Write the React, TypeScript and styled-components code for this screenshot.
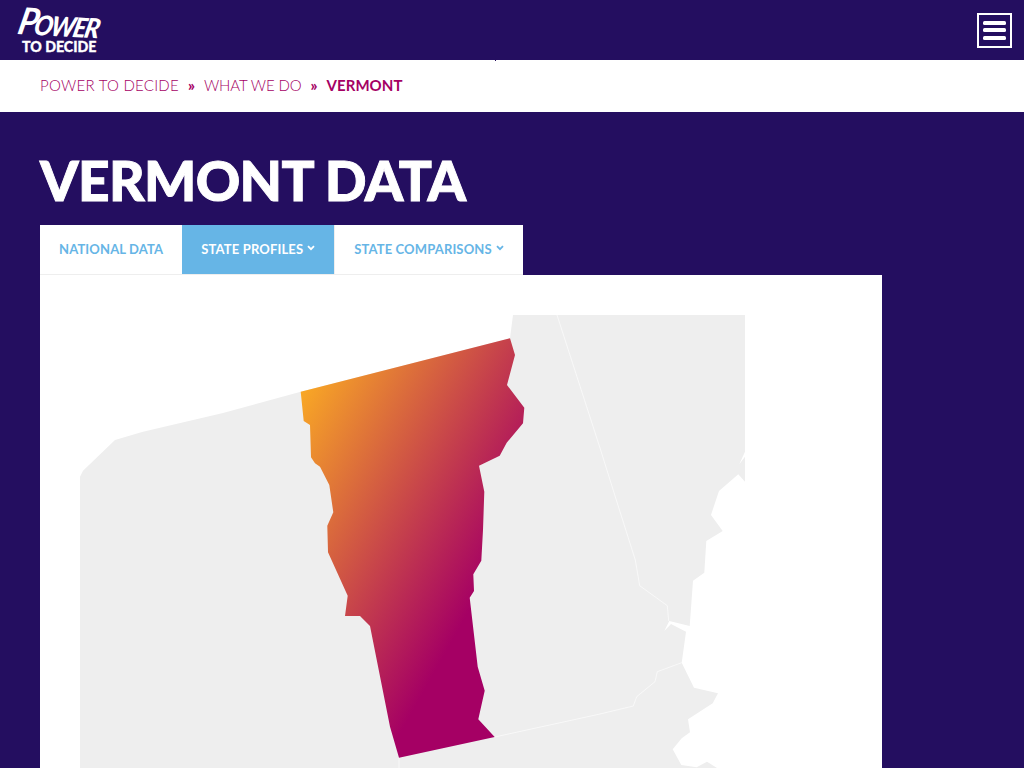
import React from "react";
import styled, { createGlobalStyle } from "styled-components";

const Global = createGlobalStyle`
  html, body { margin: 0; padding: 0; background: #240e60; }
  body { font-family: Lato, "Liberation Sans", sans-serif; }
`;
const Page = styled.div`
  height: 768px; overflow: hidden; display: flex; flex-direction: column; background: #240e60;
`;
const TopBar = styled.header`
  height: 60px; flex: none; display: flex; justify-content: space-between; align-items: center;
  padding: 0 12px 0 18px; position: relative;
`;
const Logo = styled.a`
  display: flex; flex-direction: column; align-items: flex-start; color: #fff; width: 84px;
`;
const LogoScript = styled.span`
  display: flex; align-items: baseline; white-space: nowrap; margin: -6px 0 0 -3px;
  font: italic 900 27px/30px Lato, sans-serif; letter-spacing: -1.8px;
  transform: skewX(-10deg) rotate(3deg) scaleX(0.92); transform-origin: left bottom;
`;
const LogoInitial = styled.span`
  font-size: 37px; line-height: 38px; font-weight: 700; letter-spacing: -1px; margin-right: -2.5px;
`;
const LogoSub = styled.span`
  font: 900 14.2px/13px Lato, sans-serif; -webkit-text-stroke: 0.3px #fff; white-space: nowrap;
  margin: 1px 0 0 4px;
`;
const Burger = styled.button`
  width: 35px; height: 35px; box-sizing: border-box; border: 2px solid #fff; background: none; padding: 0 4px;
  display: flex; flex-direction: column; justify-content: center; gap: 3.5px;
`;
const BurgerBar = styled.span`
  display: block; height: 4px; background: #fff; border-radius: 1.5px;
`;
const Tick = styled.i`
  position: absolute; left: 495px; top: 59px; width: 1px; height: 2px; background: #240e60;
`;
const Crumbs = styled.nav`
  height: 52px; box-sizing: border-box; flex: none; background: #fff; display: flex; align-items: center;
  padding: 0 40px 2px; gap: 9px; font-size: 15px; color: #a50064; font-weight: 300;
`;
const Crumb = styled.span<{ $spacing: string }>`letter-spacing: ${p => p.$spacing};`;
const CrumbSep = styled.span`font-weight: 900;`;
const CrumbNow = styled.span`font-weight: 700; letter-spacing: 0.05px;`;
const Main = styled.main`
  flex: 1; min-height: 0; padding: 0 40px; display: flex; flex-direction: column; align-items: flex-start;
`;
const Title = styled.h1`
  margin: 31px 0 7px; font: 900 55px/75px Lato, sans-serif; color: #fff; letter-spacing: -0.65px;
  -webkit-text-stroke: 0.9px #fff; white-space: nowrap;
`;
const Tabs = styled.div`
  display: flex; height: 50px; background: #fff; box-sizing: border-box; border-bottom: 1px solid #eee; flex: none;
`;
const Tab = styled.a<{ $active?: boolean }>`
  display: flex; align-items: center; gap: 4px; padding: 0 19px 2px; font-size: 13px; font-weight: 700;
  letter-spacing: 0.14px;
  color: ${p => (p.$active ? "#fff" : "#66b5e6")}; background: ${p => (p.$active ? "#66b5e6" : "#fff")};
  border-right: ${p => (p.$active ? "1px solid #eee" : "0")}; white-space: nowrap;
`;
const Chevron = styled.svg`width: 8px; height: 6px; margin-top: -2px;`;
const Card = styled.section`
  width: 842px; flex: 1; min-height: 0; background: #fff; overflow: hidden;
`;
const MapSvg = styled.svg`display: block; width: 842px; height: 493px;`;

const vermont =
  "300.7,391.7 510,338.3 515,355 507,385 524.3,407.7 523,423.3 506.7,442.7 499.7,455.7 479,465.7 484.3,491.7 483,530 481.3,560.7 473.3,574.3 474,591 469.7,597.7 477.7,666.7 484.7,690.7 478.3,719.3 494.7,737 399,757.7 390,726.7 370,626 360,616 345,616 347.7,595.7 328,552.3 327.3,525.7 333.3,512.3 329.3,485 320,466.7 315,463.3 311,457.3 310,425 303.7,421";
const region =
  "80,768 80,476.7 83,470.7 115,440 143,431.7 223,413 300.7,391.7 510,338.3 513,315 745,315 745,451.7 739.3,464.3 745,456.7 745,481.7 738.3,474.3 719,491 711,515 722.7,531 706.3,541 704.3,572.7 693,580.7 689.7,626 669.3,621 664.3,631 671,624 686,631.7 681.7,662.7 694,687.7 718,693.3 712.7,703.3 688,719.3 690,732.3 681.7,738.3 672.7,749.3 681.3,765 696.7,767.3 707,761.7 717,768";
const borders = [
  "557,315 600,448 620,511.7 635.3,560 639.7,585.7 667.3,605.7 668.7,621",
  "681.7,662.7 657.3,671.7 655,681.7 636.7,696.7 633.3,706 600,714 494.7,737",
  "399,757.7 399,768",
];

export default function App() {
  return (
    <Page>
      <Global />
      <TopBar>
        <Logo aria-label="Power to Decide">
          <LogoScript><LogoInitial>P</LogoInitial>OWER</LogoScript>
          <LogoSub>TO DECIDE</LogoSub>
        </Logo>
        <Burger aria-label="Menu">
          <BurgerBar />
          <BurgerBar />
          <BurgerBar />
        </Burger>
        <Tick />
      </TopBar>
      <Crumbs>
        <Crumb $spacing="0.25px">POWER TO DECIDE</Crumb>
        <CrumbSep>»</CrumbSep>
        <Crumb $spacing="-0.1px">WHAT WE DO</Crumb>
        <CrumbSep>»</CrumbSep>
        <CrumbNow>VERMONT</CrumbNow>
      </Crumbs>
      <Main>
        <Title>VERMONT DATA</Title>
        <Tabs>
          <Tab>NATIONAL DATA</Tab>
          <Tab $active>
            STATE PROFILES
            <Chevron viewBox="0 0 8 6"><path d="M1 1.2 L4 4.2 L7 1.2" fill="none" stroke="currentColor" strokeWidth="1.8" /></Chevron>
          </Tab>
          <Tab>
            STATE COMPARISONS
            <Chevron viewBox="0 0 8 6"><path d="M1 1.2 L4 4.2 L7 1.2" fill="none" stroke="currentColor" strokeWidth="1.8" /></Chevron>
          </Tab>
        </Tabs>
        <Card>
          <MapSvg viewBox="40 275 842 493">
            <defs>
              <linearGradient id="vt" gradientUnits="userSpaceOnUse" x1="300" y1="392" x2="522" y2="517">
                <stop offset="0" stopColor="#f9a825" />
                <stop offset="1" stopColor="#a50064" />
              </linearGradient>
            </defs>
            <polygon points={region} fill="#eeeeee" />
            {borders.map(b => (
              <polyline key={b} points={b} fill="none" stroke="#fff" strokeWidth="0.6" />
            ))}
            <polygon points={vermont} fill="url(#vt)" />
          </MapSvg>
        </Card>
      </Main>
    </Page>
  );
}
